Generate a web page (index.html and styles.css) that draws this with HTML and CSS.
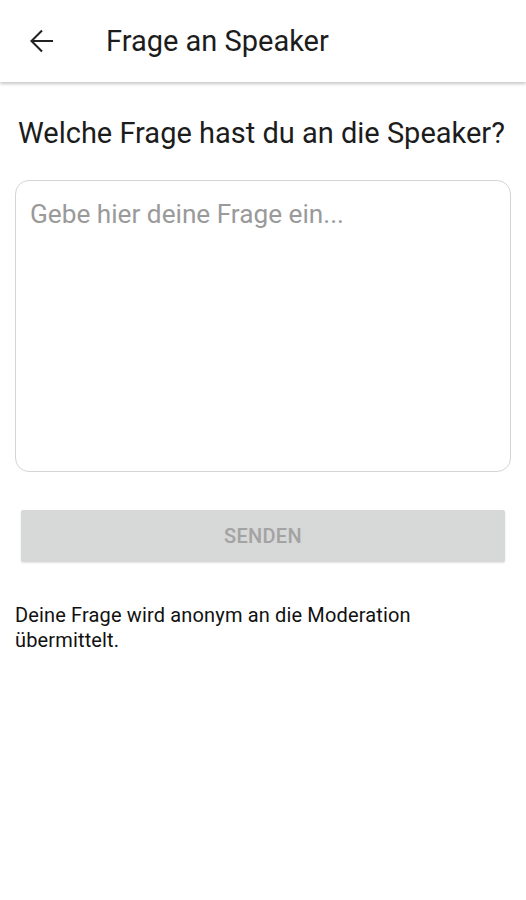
FILE: index.html
```html
<!DOCTYPE html>
<html lang="de">
<head>
<meta charset="utf-8">
<title>Frage an Speaker</title>
<link rel="stylesheet" href="styles.css">
</head>
<body>
<header class="appbar">
  <button class="back" aria-label="Zurück">
    <svg width="24" height="24" viewBox="0 0 24 24"><path d="M23 12H1.5M12 1.5L1.5 12L12 22.5" fill="none" stroke="#222" stroke-width="2.1"/></svg>
  </button>
  <h1 class="title">Frage an Speaker</h1>
</header>
<main class="content">
  <h2 class="question">Welche Frage hast du an die Speaker?</h2>
  <div class="field">
    <span class="placeholder">Gebe hier deine Frage ein...</span>
  </div>
  <div class="btnwrap">
    <button class="send" disabled>SENDEN</button>
  </div>
  <p class="note">Deine Frage wird anonym an die Moderation übermittelt.</p>
</main>
</body>
</html>
```
FILE: styles.css
```css
* { box-sizing: border-box; }
html, body { margin: 0; padding: 0; background: #fff; }
body { font-family: Roboto, "Noto Sans", sans-serif; color: #1a1a1a; width: 526px; }
.appbar {
  height: 82px;
  display: flex;
  align-items: center;
  background: #fff;
  box-shadow: 0 2px 3px rgba(0,0,0,0.22);
  position: relative;
}
.back {
  border: 0; background: none; padding: 0;
  margin-left: 30px; width: 24px; height: 24px;
  display: flex; align-items: center; justify-content: center;
}
.back svg { display: block; }
.title {
  margin: 0 0 0 52px;
  font-size: 29px;
  font-weight: 400;
  color: #1c1c1c;
}
.content { padding: 0 15px; }
.question {
  margin: 34px 0 0 3px;
  font-size: 29px;
  font-weight: 400;
  line-height: 34px;
  color: #1c1c1c;
  white-space: nowrap;
}
.field {
  margin-top: 30px;
  height: 292px;
  border: 1.5px solid #d4d4d4;
  border-radius: 14px;
  padding: 18px 14px;
}
.placeholder { font-size: 26.2px; color: #9a9a9a; line-height: 30px; }
.btnwrap { padding: 0 6px; margin-top: 38px; }
.send {
  width: 100%;
  height: 52px;
  border: 0;
  border-radius: 2px;
  background: #d7d8d8;
  color: #a3a3a3;
  font-family: Roboto, sans-serif;
  font-size: 20px;
  font-weight: 500;
  letter-spacing: 0.3px;
  box-shadow: 0 1px 2px rgba(0,0,0,0.12);
}
.note {
  margin: 41px 0 0 0;
  width: 440px;
  font-size: 20px;
  letter-spacing: 0.15px;
  line-height: 25px;
  color: #111;
}
```
